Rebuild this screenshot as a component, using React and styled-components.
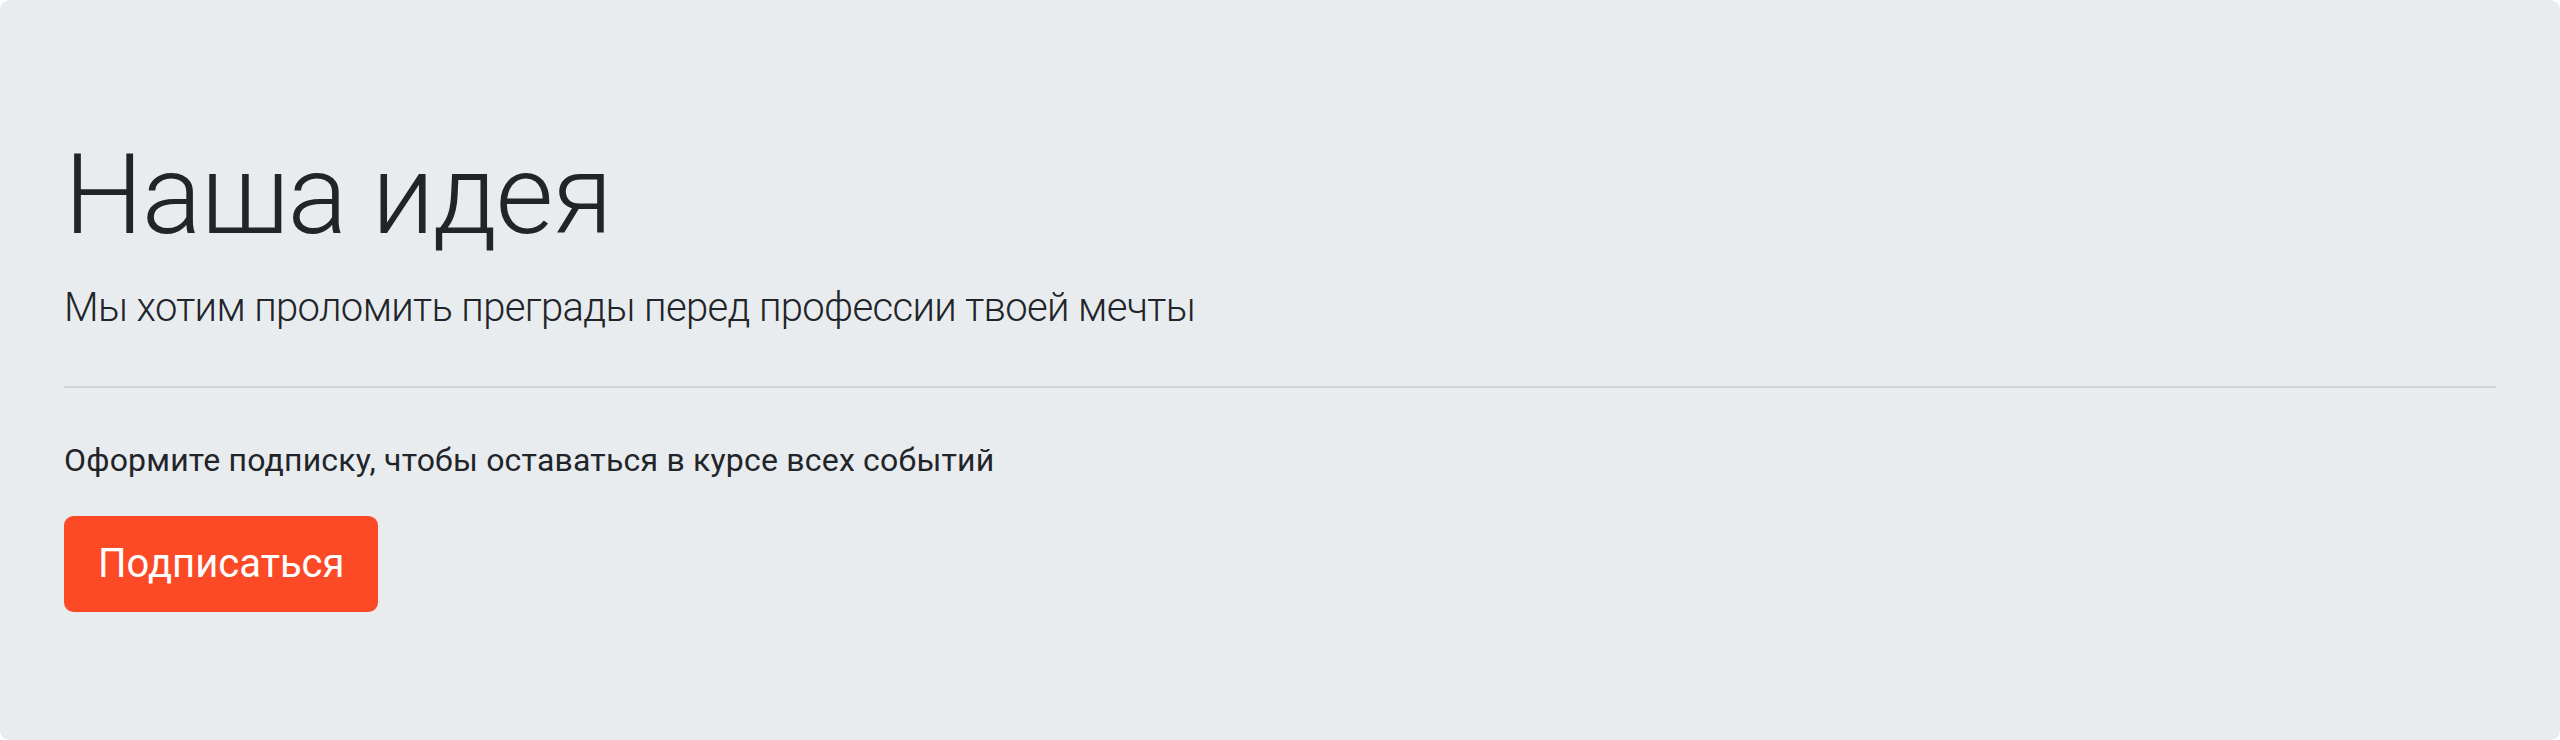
import React from "react";
import styled, { createGlobalStyle } from "styled-components";

const Global = createGlobalStyle`
  html, body { margin: 0; padding: 0; }
  body {
    background: #ffffff;
    color: #212529;
    font-family: Roboto, "Helvetica Neue", Arial, sans-serif;
    font-size: 32px;
    line-height: 1.5;
  }
  * { box-sizing: border-box; }
`;

const Jumbotron = styled.section`
  background: #e9ecef;
  border-radius: 9.6px;
  padding: 128px 64px;
`;

const Display = styled.h1`
  margin: 0 0 16px;
  font-size: 112px;
  font-weight: 300;
  line-height: 1.2;
  letter-spacing: -1.6px;
  color: #212529;
`;

const Lead = styled.p`
  margin: 0 0 48px;
  font-size: 40px;
  font-weight: 300;
  line-height: 1.5;
  letter-spacing: -0.65px;
`;

const Divider = styled.hr`
  margin: 0 0 48px;
  border: 0;
  border-top: 2px solid rgba(0, 0, 0, 0.1);
  height: 0;
`;

const Text = styled.p`
  margin: 0 0 32px;
  font-size: 32px;
  font-weight: 400;
  line-height: 1.5;
  letter-spacing: 0.2px;
`;

const Button = styled.a`
  display: inline-block;
  padding: 16px 32px;
  font-size: 40px;
  line-height: 1.5;
  font-weight: 400;
  color: #ffffff;
  background: #fc4a27;
  border: 2px solid #fc4a27;
  border-radius: 9.6px;
  text-decoration: none;
  cursor: pointer;
`;

export default function App() {
  return (
    <>
      <Global />
      <Jumbotron>
        <Display>Наша идея</Display>
        <Lead>Мы хотим проломить преграды перед профессии твоей мечты</Lead>
        <Divider />
        <Text>Оформите подписку, чтобы оставаться в курсе всех событий</Text>
        <Button href="#" role="button">Подписаться</Button>
      </Jumbotron>
    </>
  );
}
